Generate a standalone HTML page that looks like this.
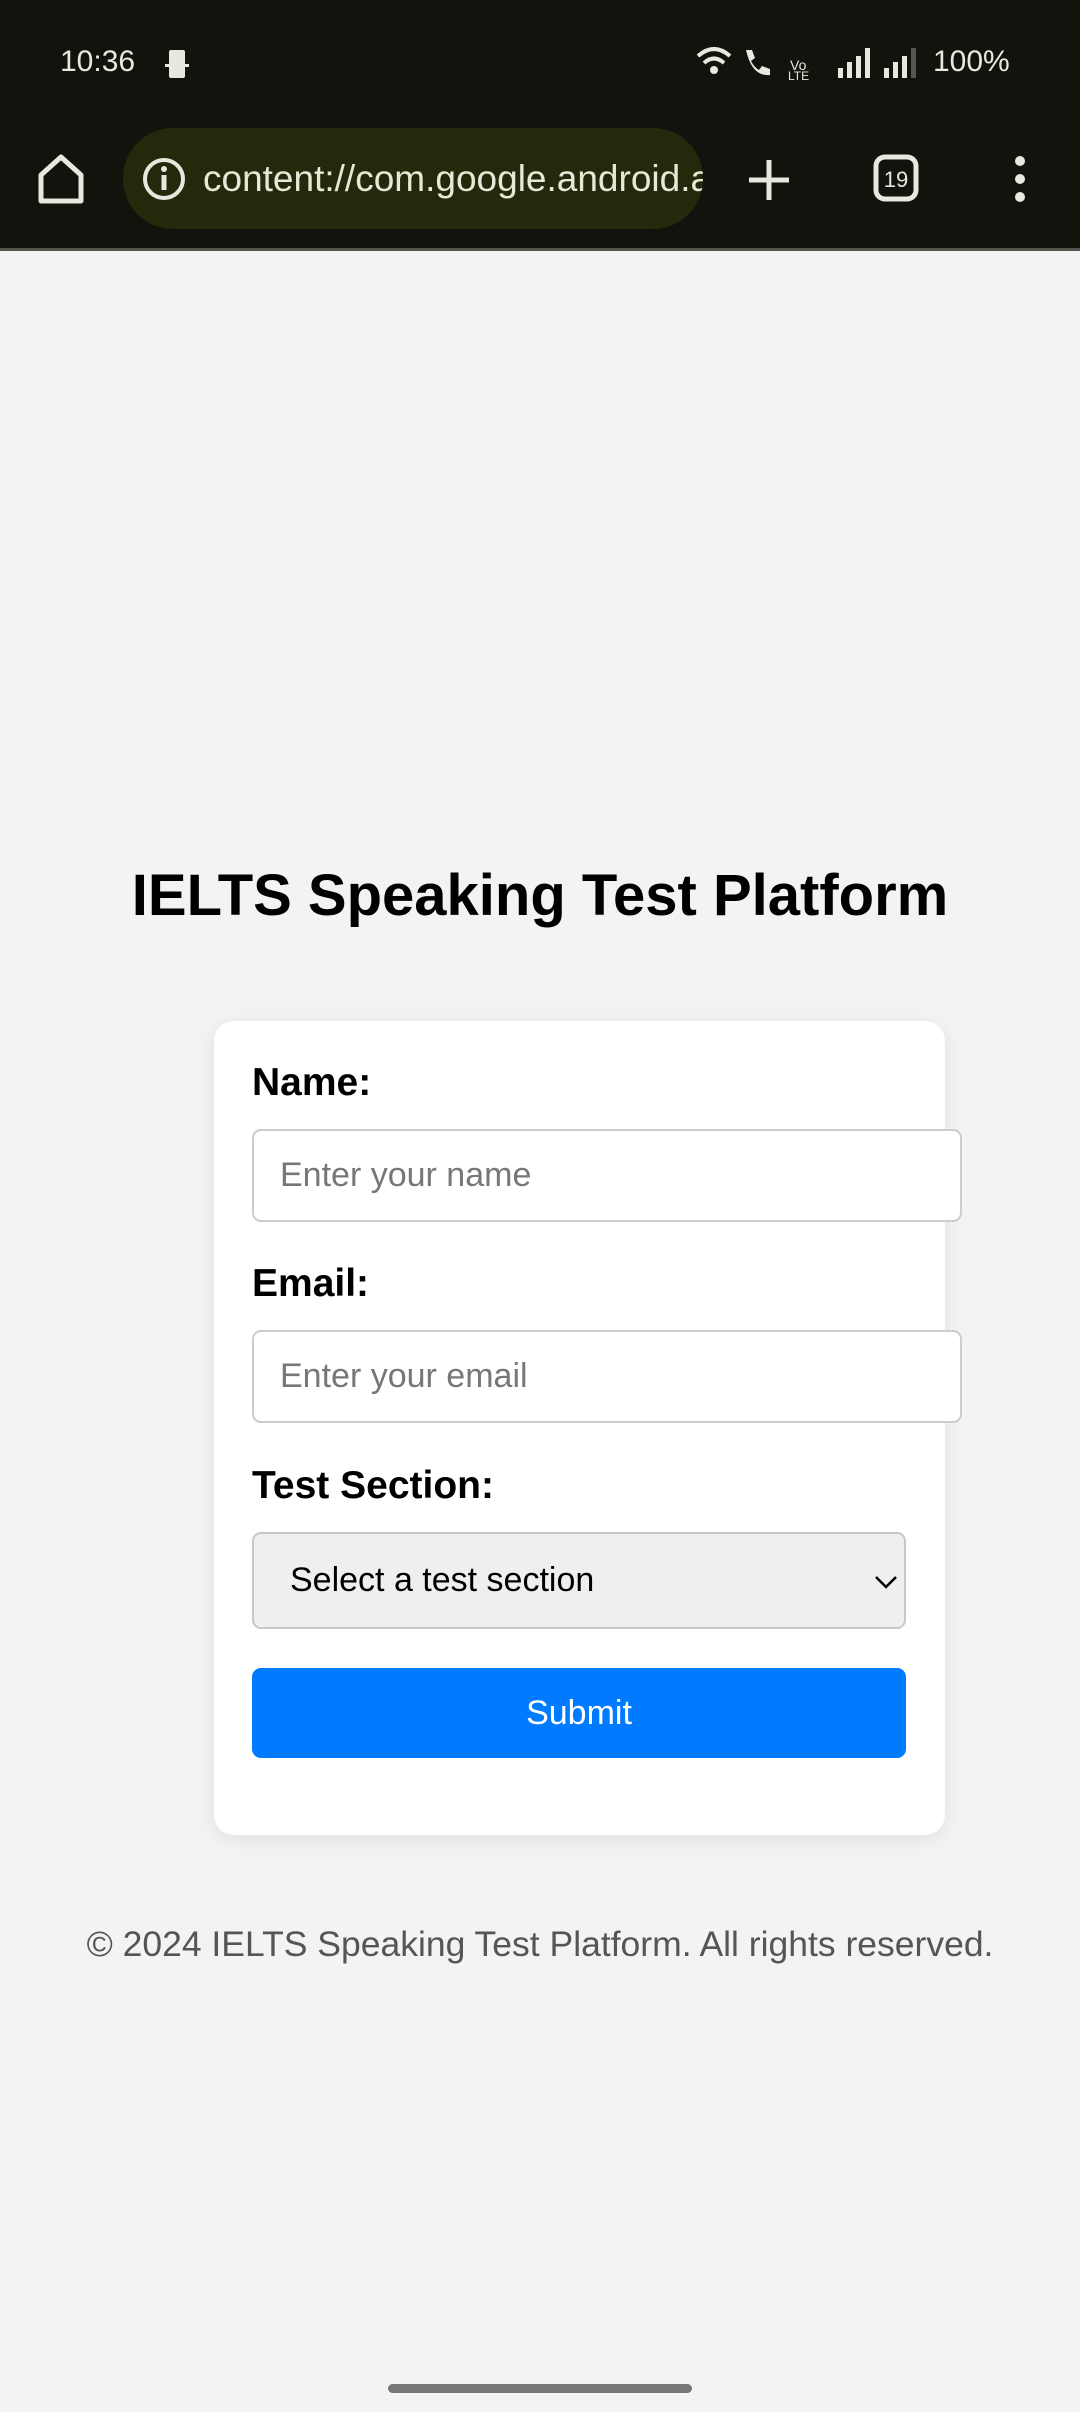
<!DOCTYPE html>
<html><head><meta charset="utf-8"><style>
*{margin:0;padding:0;box-sizing:border-box}
body{width:1080px;height:2412px;background:#f3f3f3;font-family:"Liberation Sans",Arial,sans-serif;position:relative;overflow:hidden}
.top{position:absolute;left:0;top:0;width:1080px;height:251px;background:#11140c;border-bottom:3px solid #50544a}
.abs{position:absolute}
.sb{color:#e8e8de;font-size:30px}
.pill{left:123px;top:128px;width:580px;height:101px;border-radius:50px;background:#232a0b;overflow:hidden}
.url{left:80px;top:30px;font-size:37px;color:#e8e8d6;white-space:nowrap}
.title{top:862px;left:0;width:1080px;text-align:center;font-weight:bold;font-size:58px;color:#000}
.card{left:214px;top:1021px;width:731px;height:814px;background:#fff;border-radius:20px;box-shadow:0 4px 20px rgba(0,0,0,.08)}
.lbl{font-weight:bold;font-size:39px;color:#000;left:252px}
.inp{left:252px;width:710px;height:93px;border:2px solid #ccc;border-radius:9px;background:#fff;font-size:34px;color:#777;padding-left:26px;line-height:89px}
.sel{left:252px;top:1532px;width:654px;height:97px;border:2px solid #c8c8c8;border-radius:9px;background:#efefef;font-size:34px;color:#000;padding-left:36px;line-height:93px}
.btn{left:252px;top:1668px;width:654px;height:90px;background:#007bff;border-radius:9px;color:#fff;font-size:34px;text-align:center;line-height:90px}
.foot{top:1924px;left:0;width:1080px;text-align:center;font-size:35.5px;color:#555}
</style></head><body>
<div class="top">
<div class="abs sb" style="left:60px;top:45px">10:36</div>
<svg class="abs" style="left:163px;top:48px" width="30" height="32" viewBox="0 0 30 32"><rect x="6" y="2" width="16" height="28" rx="2" fill="#e8e8de"/><rect x="2" y="16" width="24" height="3" fill="#e8e8de"/></svg>
<svg class="abs" style="left:694px;top:44px" width="320" height="36" viewBox="0 0 320 36">
<g fill="none" stroke="#e8e8de" stroke-width="4"><path d="M4 12 Q20 -2 36 12"/><path d="M10 19 Q20 10 30 19"/></g>
<circle cx="20" cy="26" r="4" fill="#e8e8de"/>
<path d="M52 6 l6 0 3 8 -4 3 q3 6 8 9 l3-4 8 3 0 6 q-18 2 -24-25z" fill="#e8e8de"/>
<text x="96" y="26" font-size="14" fill="#e8e8de" font-family="Liberation Sans">Vo</text><text x="94" y="36" font-size="12" fill="#e8e8de" font-family="Liberation Sans">LTE</text>
<g fill="#e8e8de"><rect x="144" y="24" width="5" height="10"/><rect x="153" y="18" width="5" height="16"/><rect x="162" y="12" width="5" height="22"/><rect x="171" y="4" width="5" height="30"/>
<rect x="190" y="24" width="5" height="10"/><rect x="199" y="18" width="5" height="16"/><rect x="208" y="12" width="5" height="22"/></g><rect x="217" y="4" width="5" height="30" fill="#555"/>
</svg>
<div class="abs sb" style="left:933px;top:45px">100%</div>
<svg class="abs" style="left:36px;top:153px" width="50" height="52" viewBox="0 0 50 52"><path d="M5 48 V22 L25 4 L45 22 V48 Z" fill="none" stroke="#e8e8de" stroke-width="5" stroke-linejoin="round"/></svg>
<div class="abs pill">
<svg class="abs" style="left:18px;top:28px" width="46" height="46" viewBox="0 0 46 46"><circle cx="23" cy="23" r="19" fill="none" stroke="#e8e8de" stroke-width="4"/><rect x="20.5" y="19" width="5" height="15" fill="#e8e8de"/><circle cx="23" cy="13" r="3" fill="#e8e8de"/></svg>
<div class="abs url">content://com.google.android.apps</div>
</div>
<svg class="abs" style="left:746px;top:157px" width="46" height="46" viewBox="0 0 46 46"><path d="M23 3V43M3 23H43" stroke="#e8e8de" stroke-width="5"/></svg>
<svg class="abs" style="left:872px;top:153px" width="48" height="50" viewBox="0 0 48 50"><rect x="4" y="4" width="40" height="42" rx="9" fill="none" stroke="#e8e8de" stroke-width="5"/><text x="24" y="34" text-anchor="middle" font-size="22" fill="#e8e8de" font-family="Liberation Sans">19</text></svg>
<svg class="abs" style="left:1008px;top:155px" width="24" height="48" viewBox="0 0 24 48"><circle cx="12" cy="6" r="5" fill="#e8e8de"/><circle cx="12" cy="24" r="5" fill="#e8e8de"/><circle cx="12" cy="42" r="5" fill="#e8e8de"/></svg>
</div>
<div class="abs title">IELTS Speaking Test Platform</div>
<div class="abs card"></div>
<div class="abs lbl" style="top:1061px">Name:</div>
<div class="abs inp" style="top:1129px">Enter your name</div>
<div class="abs lbl" style="top:1262px">Email:</div>
<div class="abs inp" style="top:1330px">Enter your email</div>
<div class="abs lbl" style="top:1464px">Test Section:</div>
<div class="abs sel">Select a test section
<svg class="abs" style="left:620px;top:40px" width="24" height="16" viewBox="0 0 24 16"><path d="M2 3 L12 13 L22 3" fill="none" stroke="#000" stroke-width="2.5"/></svg></div>
<div class="abs btn">Submit</div>
<div class="abs foot">© 2024 IELTS Speaking Test Platform. All rights reserved.</div>
<div class="abs" style="left:388px;top:2384px;width:304px;height:9px;border-radius:5px;background:#777"></div>
</body></html>
